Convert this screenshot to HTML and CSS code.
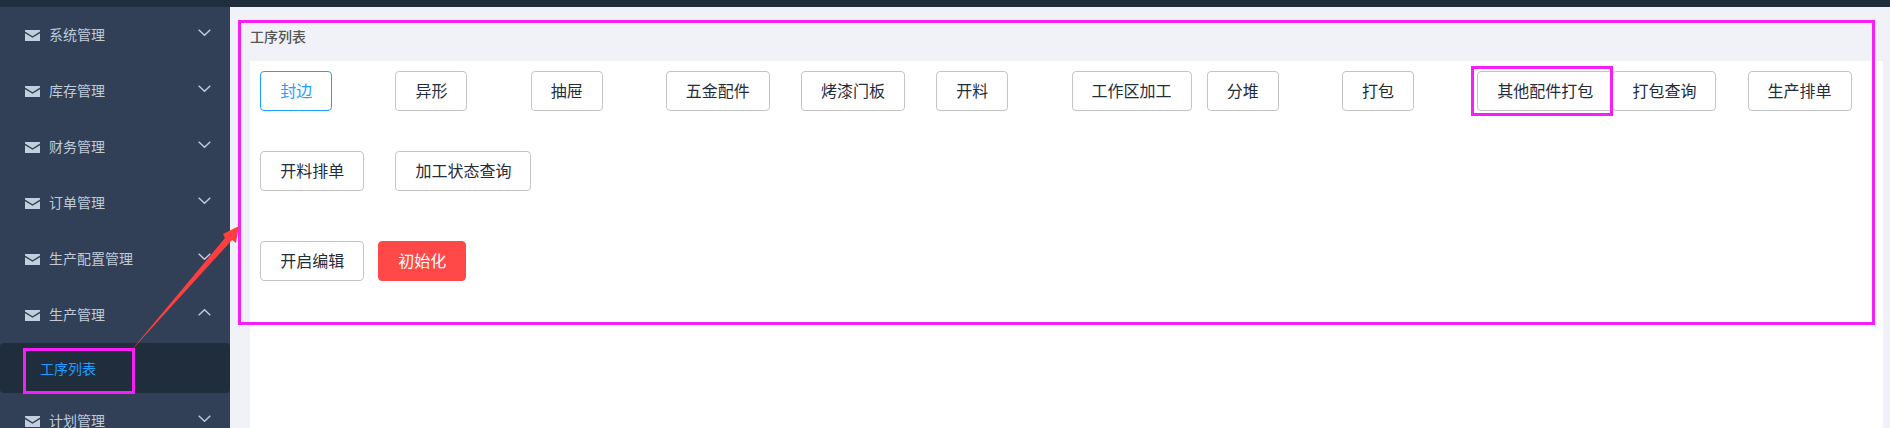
FILE: index.html
```html
<!DOCTYPE html>
<html lang="zh-CN">
<head>
    <meta charset="UTF-8">
    <title>工序列表</title>
    <link rel="stylesheet" href="styles.css">
</head>
<body>
    <svg width="0" height="0" class="defs">
        <symbol id="mail" viewBox="0 0 15 11">
            <path d="M0 0h15v1.6L7.5 6.2 0 1.6z"/>
            <path d="M0 3.2l7.5 4.6L15 3.2V11H0z"/>
        </symbol>
        <symbol id="chevron" viewBox="0 0 13 7">
            <path d="M.7.7l5.8 5.6L12.3.7" fill="none" stroke="currentColor" stroke-width="1.4"/>
        </symbol>
    </svg>

    <div class="topbar"></div>

    <div class="layout">
        <!-- Sidebar -->
        <div class="sidebar">
            <div class="menu-item">
                <svg class="mail-icon"><use href="#mail"/></svg>
                <span class="menu-text">系统管理</span>
                <svg class="chevron"><use href="#chevron"/></svg>
            </div>
            <div class="menu-item">
                <svg class="mail-icon"><use href="#mail"/></svg>
                <span class="menu-text">库存管理</span>
                <svg class="chevron"><use href="#chevron"/></svg>
            </div>
            <div class="menu-item">
                <svg class="mail-icon"><use href="#mail"/></svg>
                <span class="menu-text">财务管理</span>
                <svg class="chevron"><use href="#chevron"/></svg>
            </div>
            <div class="menu-item">
                <svg class="mail-icon"><use href="#mail"/></svg>
                <span class="menu-text">订单管理</span>
                <svg class="chevron"><use href="#chevron"/></svg>
            </div>
            <div class="menu-item">
                <svg class="mail-icon"><use href="#mail"/></svg>
                <span class="menu-text">生产配置管理</span>
                <svg class="chevron"><use href="#chevron"/></svg>
            </div>
            <div class="menu-item">
                <svg class="mail-icon"><use href="#mail"/></svg>
                <span class="menu-text">生产管理</span>
                <svg class="chevron chevron-up"><use href="#chevron"/></svg>
            </div>
            <div class="submenu-item">工序列表</div>
            <div class="menu-item">
                <svg class="mail-icon"><use href="#mail"/></svg>
                <span class="menu-text">计划管理</span>
                <svg class="chevron"><use href="#chevron"/></svg>
            </div>
        </div>

        <!-- Main -->
        <div class="main">
            <div class="page-title">工序列表</div>
            <div class="panel">
                <div class="process-grid">
                    <div class="cell"><button class="btn btn-active">封边</button></div>
                    <div class="cell"><button class="btn">异形</button></div>
                    <div class="cell"><button class="btn">抽屉</button></div>
                    <div class="cell"><button class="btn">五金配件</button></div>
                    <div class="cell"><button class="btn">烤漆门板</button></div>
                    <div class="cell"><button class="btn">开料</button></div>
                    <div class="cell"><button class="btn">工作区加工</button></div>
                    <div class="cell"><button class="btn">分堆</button></div>
                    <div class="cell"><button class="btn">打包</button></div>
                    <div class="cell"><button class="btn">其他配件打包</button></div>
                    <div class="cell"><button class="btn">打包查询</button></div>
                    <div class="cell"><button class="btn">生产排单</button></div>
                    <div class="cell"><button class="btn">开料排单</button></div>
                    <div class="cell"><button class="btn">加工状态查询</button></div>
                </div>
                <div class="actions">
                    <button class="btn">开启编辑</button>
                    <button class="btn btn-danger">初始化</button>
                </div>
            </div>
        </div>
    </div>

    <!-- Annotations drawn over the screenshot -->
    <div class="mark mark-panel"></div>
    <div class="mark mark-button"></div>
    <div class="mark mark-menu"></div>
    <svg class="arrow" width="1890" height="428" viewBox="0 0 1890 428">
        <path d="M129 353L225 238 223 234 239 226 236 243 232 240z"/>
    </svg>
</body>
</html>
```

FILE: styles.css
```css
* {
    margin: 0;
    padding: 0;
    box-sizing: border-box;
}

body {
    width: 1890px;
    height: 428px;
    overflow: hidden;
    font-family: "Noto Sans CJK SC", "Liberation Sans", sans-serif;
    font-size: 14px;
    background: #f0f2f7;
}

.defs {
    position: absolute;
}

.topbar {
    height: 7px;
    background: #1f2d3d;
}

.layout {
    display: flex;
    height: 421px;
}

/* sidebar */
.sidebar {
    width: 230px;
    flex-shrink: 0;
    overflow: hidden;
    background: #324057;
}

.menu-item {
    display: flex;
    align-items: center;
    height: 56px;
    padding-left: 25px;
    color: #bfcbd9;
}

.mail-icon {
    width: 15px;
    height: 11px;
    margin-right: 9px;
    fill: #c3cfdd;
}

.menu-text {
    flex: 1;
    margin-bottom: 2px;
}

.chevron {
    width: 13px;
    height: 7px;
    margin-right: 19px;
    margin-bottom: 5px;
    color: #bfcbd9;
}

.chevron-up {
    transform: rotate(180deg);
}

.submenu-item {
    height: 50px;
    line-height: 50px;
    padding-left: 40px;
    color: #1f9dff;
    background: #1f2d3d;
    border-radius: 4px;
}

/* main */
.main {
    flex: 1;
    padding-left: 20px;
    padding-right: 7px;
    display: flex;
    flex-direction: column;
}

.page-title {
    height: 54px;
    line-height: 58px;
    font-weight: 500;
    color: #555;
}

.panel {
    flex: 1;
    padding: 10px 0 0 10.2px;
    background: #fff;
}

.process-grid {
    display: flex;
    flex-wrap: wrap;
}

.cell {
    width: 8.3333%;
    height: 80px;
}

.btn {
    height: 40px;
    padding: 0 19px 2px;
    border: 1px solid #c4c4c4;
    border-radius: 4px;
    background: #fff;
    color: #1f2d3d;
    font-family: inherit;
    font-size: 16px;
    white-space: nowrap;
}

.btn-active {
    border-color: #20a0ff;
    color: #20a0ff;
}

.btn-danger {
    border-color: #ff4949;
    background: #ff4949;
    color: #fff;
}

.actions {
    display: flex;
    gap: 14px;
    margin-top: 10px;
}

/* annotations */
.mark {
    position: absolute;
    border: 3px solid #f81ef8;
}

.mark-panel {
    left: 238px;
    top: 20px;
    width: 1637px;
    height: 305px;
}

.mark-button {
    left: 1471px;
    top: 66px;
    width: 142px;
    height: 50px;
}

.mark-menu {
    left: 23px;
    top: 348px;
    width: 112px;
    height: 46px;
}

.arrow {
    position: absolute;
    left: 0;
    top: 0;
    fill: #ff3f3f;
}
```
